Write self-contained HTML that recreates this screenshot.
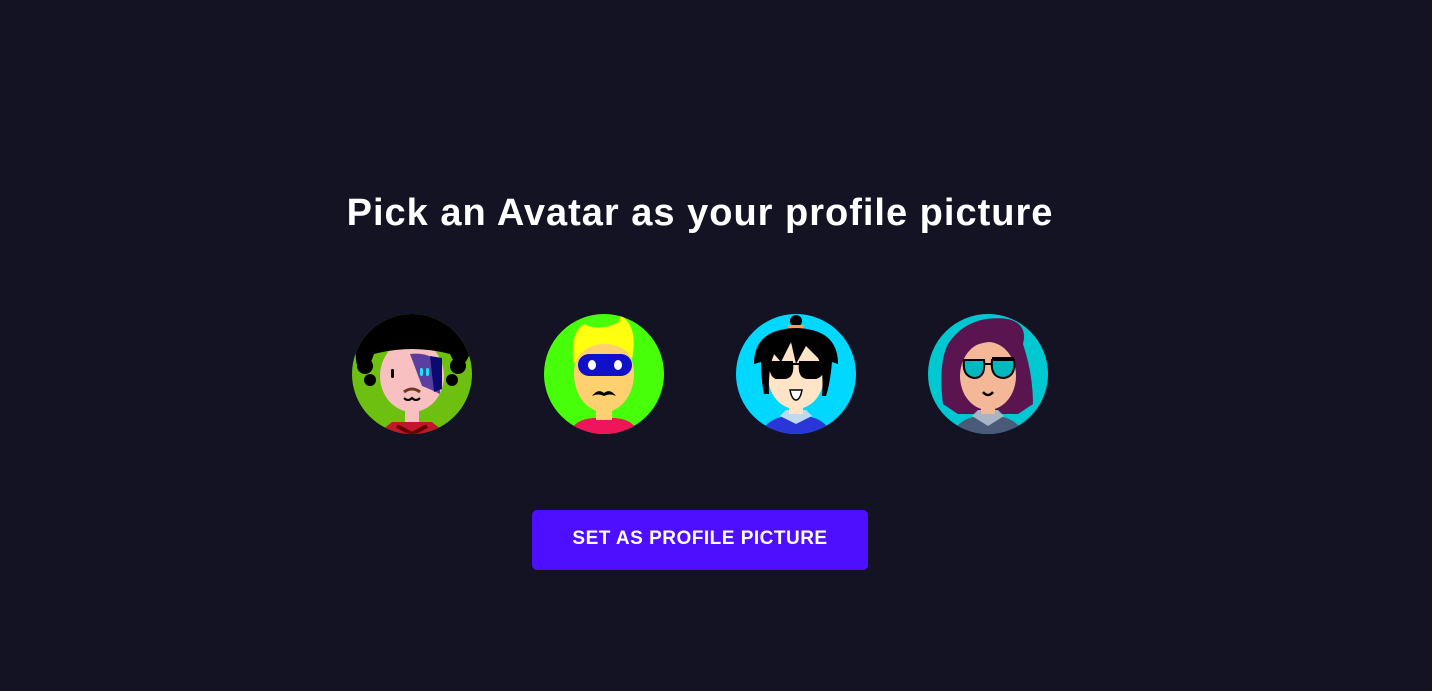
<!DOCTYPE html>
<html><head><meta charset="utf-8"><style>
html,body{margin:0;padding:0;background:#131324;width:1432px;height:691px;overflow:hidden;font-family:"Liberation Sans",sans-serif}
h1{position:absolute;left:0;width:1400px;top:192px;margin:0;text-align:center;color:#fff;font-size:38px;font-weight:bold;letter-spacing:1px}
.av{position:absolute;top:314px;width:120px;height:120px;}
.btn{position:absolute;left:532px;top:510px;width:336px;height:60px;background:#4e0eff;border-radius:5px;color:#fff;font-weight:bold;font-size:19px;text-align:center;line-height:58px;letter-spacing:0.5px}
</style></head><body>
<h1>Pick an Avatar as your profile picture</h1>

<svg class="av" style="left:352px" viewBox="0 0 120 120"><defs><clipPath id="c1"><circle cx="60" cy="60" r="60"/></clipPath></defs>
<g clip-path="url(#c1)"><rect width="120" height="120" fill="#6dbf10"/>
<path d="M25 120 L40 108 L80 108 L95 120Z" fill="#c0182a"/>
<path d="M45 112 L60 120 L75 112" stroke="#600" stroke-width="4" fill="none"/>
<rect x="53" y="88" width="14" height="20" fill="#f8c0c0"/>
<ellipse cx="60" cy="62" rx="32" ry="36" fill="#f8c0c0"/>
<path d="M58 40 Q75 38 88 48 L88 80 Q78 75 70 72 Z" fill="#5a3fa0"/>
<path d="M78 42 L90 44 L90 75 L82 78Z" fill="#0a0a70"/>
<path d="M4 45 Q0 5 40 1 Q80 -5 110 15 Q125 35 112 50 Q108 58 104 52 L98 40 Q60 30 22 40 L16 56 Q4 56 4 45Z" fill="#000"/>
<circle cx="13" cy="52" r="8" fill="#000"/><circle cx="18" cy="66" r="6" fill="#000"/>
<circle cx="106" cy="52" r="8" fill="#000"/><circle cx="100" cy="66" r="6" fill="#000"/>
<rect x="39" y="55" width="3" height="9" rx="1.5" fill="#000"/>
<rect x="68" y="54" width="3" height="8" rx="1.5" fill="#1de4f0"/><rect x="74" y="54" width="3" height="8" rx="1.5" fill="#1de4f0"/>
<path d="M52 78 Q60 72 68 78" stroke="#6b3a20" stroke-width="3" fill="none"/>
<path d="M52 84 Q56 88 60 84 Q64 88 68 84" stroke="#000" stroke-width="2" fill="none"/>
</g></svg>

<svg class="av" style="left:544px" viewBox="0 0 120 120"><defs><clipPath id="c2"><circle cx="60" cy="60" r="60"/></clipPath></defs>
<g clip-path="url(#c2)"><rect width="120" height="120" fill="#48ff0a"/>
<path d="M25 120 Q30 105 50 104 L70 104 Q90 105 95 120Z" fill="#f0145a"/>
<rect x="52" y="90" width="16" height="16" fill="#ffd070"/>
<ellipse cx="60" cy="60" rx="30" ry="38" fill="#ffd070"/>
<path d="M30 50 Q25 20 40 10 Q55 18 75 8 Q78 2 74 0 Q95 10 88 45 Q80 30 60 30 Q40 30 30 50Z" fill="#ffff10"/>
<rect x="34" y="40" width="54" height="22" rx="11" fill="#1010c8"/>
<ellipse cx="48" cy="51" rx="4" ry="5" fill="#fff"/><ellipse cx="74" cy="51" rx="4" ry="5" fill="#fff"/>
<path d="M48 82 Q54 74 60 79 Q66 74 72 82 Q66 79 60 82 Q54 79 48 82Z" fill="#000"/>
</g></svg>

<svg class="av" style="left:736px" viewBox="0 0 120 120"><defs><clipPath id="c3"><circle cx="60" cy="60" r="60"/></clipPath></defs>
<g clip-path="url(#c3)"><rect width="120" height="120" fill="#00d8ff"/>
<path d="M25 120 Q30 105 50 102 L70 102 Q90 105 95 120Z" fill="#2a36d8"/>
<path d="M44 102 L60 110 L76 102 L70 96 L50 96Z" fill="#c0d8f0"/>
<rect x="53" y="86" width="14" height="14" fill="#ffe4c8"/>
<ellipse cx="60" cy="62" rx="28" ry="33" fill="#ffe4c8"/>
<circle cx="60" cy="7" r="6" fill="#000"/><rect x="52" y="11" width="16" height="4" fill="#f4a050"/>
<path d="M18 50 Q18 15 60 14 Q102 15 102 50 L96 48 Q94 70 90 82 L86 82 Q88 55 82 44 L70 32 L60 50 L55 28 L45 48 L38 40 Q32 55 33 80 L28 80 Q25 65 25 48Z" fill="#000"/>
<path d="M34 48 L56 48 Q58 64 48 64 L40 64 Q34 62 34 48Z M64 48 L88 48 Q88 62 80 64 L72 64 Q62 64 64 48Z M52 50 L68 50" fill="#000" stroke="#000" stroke-width="2"/>
<path d="M54 76 L66 76 Q64 86 60 86 Q56 86 54 76Z" fill="#fff" stroke="#000" stroke-width="1.5"/>
</g></svg>

<svg class="av" style="left:928px" viewBox="0 0 120 120"><defs><clipPath id="c4"><circle cx="60" cy="60" r="60"/></clipPath></defs>
<g clip-path="url(#c4)"><rect width="120" height="120" fill="#00c8d0"/>
<path d="M15 90 Q10 50 20 30 Q40 0 80 5 Q100 10 95 30 Q105 60 105 90 L90 100 L30 100Z" fill="#5a1450"/>
<path d="M25 120 Q30 105 50 102 L70 102 Q90 105 95 120Z" fill="#4a5a78"/>
<path d="M44 102 L60 112 L76 102 L70 96 L50 96Z" fill="#a8b4c4"/>
<rect x="53" y="86" width="14" height="14" fill="#f4b898"/>
<ellipse cx="60" cy="62" rx="28" ry="34" fill="#f4b898"/>
<path d="M30 45 Q45 25 75 28 Q82 30 88 40 L88 30 Q70 18 40 24Z" fill="#5a1450"/>
<path d="M36 46 L56 46 Q58 64 46 64 Q34 62 36 46Z M64 46 L86 46 Q88 62 76 64 Q62 64 64 46Z" fill="#00b8c0" stroke="#000" stroke-width="2"/>
<path d="M56 50 L64 50 M64 44 L86 44" stroke="#000" stroke-width="2"/>
<path d="M55 78 Q60 84 65 78" stroke="#000" stroke-width="2.5" fill="none"/>
</g></svg>

<div class="btn">SET AS PROFILE PICTURE</div>
</body></html>
